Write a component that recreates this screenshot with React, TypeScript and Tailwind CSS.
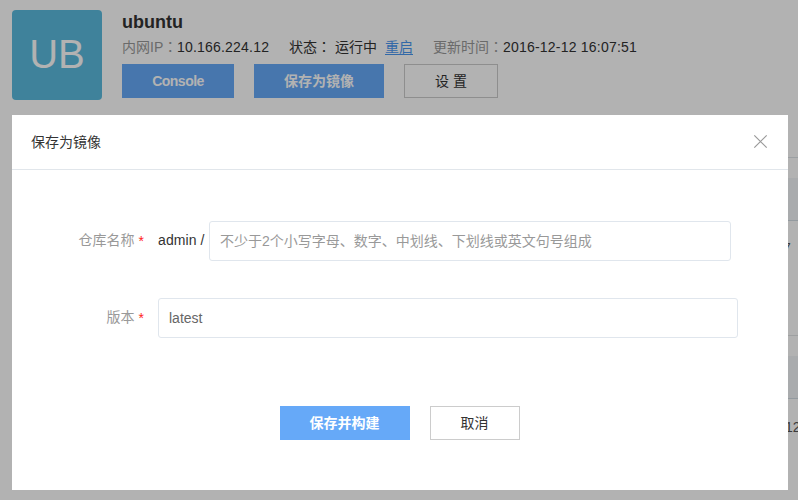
import React from "react";

const Colon = () => <span className="font-['Noto_Sans_CJK_TC',sans-serif] leading-none">：</span>;

function Header() {
  return (
    <header className="flex gap-5 pt-[10px] pl-3">
      <div className="flex h-[90px] w-[90px] shrink-0 items-center justify-center rounded-[4px] bg-[#5bbbde] pb-[2px] text-[40px] leading-none text-white">
        UB
      </div>
      <div className="flex flex-col whitespace-nowrap">
        <h1 className="h-6 text-lg leading-6 font-bold">ubuntu</h1>
        <div className="flex h-[30px] items-start gap-5 text-sm leading-[26px]">
          <div className="flex w-[147px]">
            <span className="w-[55px] text-[#999]">内网IP<Colon /></span>
            <span className="tracking-[0.2px]">10.166.224.12</span>
          </div>
          <div className="flex w-[124px]">
            <span className="w-[46px]">状态<Colon /></span>
            <span className="w-[50px]">运行中</span>
            <a className="text-[#4a97f0] underline underline-offset-2">重启</a>
          </div>
          <div className="flex">
            <span className="w-[70px] text-[#999]">更新时间<Colon /></span>
            <span className="tracking-[0.21px]">2016-12-12 16:07:51</span>
          </div>
        </div>
        <div className="flex gap-5 text-sm">
          <button className="h-[34px] w-28 bg-[#66a9f8] font-bold tracking-[-0.5px] text-white">Console</button>
          <button className="h-[34px] w-[130px] bg-[#66a9f8] font-bold text-white">保存为镜像</button>
          <button className="h-[34px] w-[94px] border border-[#ccc]">设 置</button>
        </div>
      </div>
    </header>
  );
}

function Panels() {
  return (
    <section className="mt-[57px] pl-3 text-sm">
      <div className="h-px bg-[#dfe4e8]" />
      <div className="mt-5 h-[43px] border-b border-[#d3dde4] bg-[#f2f5f8]" />
      <div className="flex h-[54px] items-center pl-[771px] text-[#555]">7</div>
      <div className="mt-[60px] h-px bg-[#e3e5e7]" />
      <div className="mt-5 h-[43px] border-b border-[#d3dde4] bg-[#f2f5f8]" />
      <div className="flex h-[56px] items-center pl-[773px] text-[#555]">12</div>
    </section>
  );
}

const Label = ({ children }: { children: React.ReactNode }) => (
  <label className="flex w-[132px] shrink-0 justify-end pb-[2px] text-[#999]">
    {children}
    <span className="ml-1 pt-px text-[#f22]">*</span>
  </label>
);

function SaveDialog() {
  return (
    <div role="dialog" className="h-[375px] w-[776px] bg-white text-sm">
      <div className="flex h-[55px] items-center justify-between border-b border-[#e1e6eb] pr-5 pb-px pl-[19px]">
        <span>保存为镜像</span>
        <svg className="h-[15px] w-[15px]" viewBox="0 0 15 15" fill="none" stroke="#999" strokeWidth="1.2">
          <path d="M1.3 1.3 13.7 13.7M13.7 1.3 1.3 13.7" />
        </svg>
      </div>
      <div className="flex items-center pt-[51px]">
        <Label>仓库名称</Label>
        <span className="ml-[14px] w-[51px] pb-[2px] tracking-[0.1px] whitespace-nowrap">admin /</span>
        <input
          className="h-10 w-[522px] rounded-[3px] border border-[#e0e6ed] px-[10px] text-[#666] placeholder:text-[#999]"
          placeholder="不少于2个小写字母、数字、中划线、下划线或英文句号组成"
        />
      </div>
      <div className="flex items-center pt-[37px]">
        <Label>版本</Label>
        <input
          className="ml-[14px] h-10 w-[580px] rounded-[3px] border border-[#e0e6ed] px-[10px] text-[#666]"
          defaultValue="latest"
        />
      </div>
      <div className="flex justify-center gap-5 pt-[68px]">
        <button className="h-[34px] w-[130px] bg-[#66a9f8] pr-px font-bold text-white">保存并构建</button>
        <button className="h-[34px] w-[90px] border border-[#ccc] pr-px">取消</button>
      </div>
    </div>
  );
}

export default function App() {
  return (
    <div className="relative h-[500px] w-full overflow-hidden bg-white font-['Liberation_Sans','Noto_Sans_CJK_SC',sans-serif] text-[#333]">
      <Header />
      <Panels />
      <div className="absolute inset-0 bg-black/30 pt-[115px] pl-3">
        <SaveDialog />
      </div>
    </div>
  );
}
